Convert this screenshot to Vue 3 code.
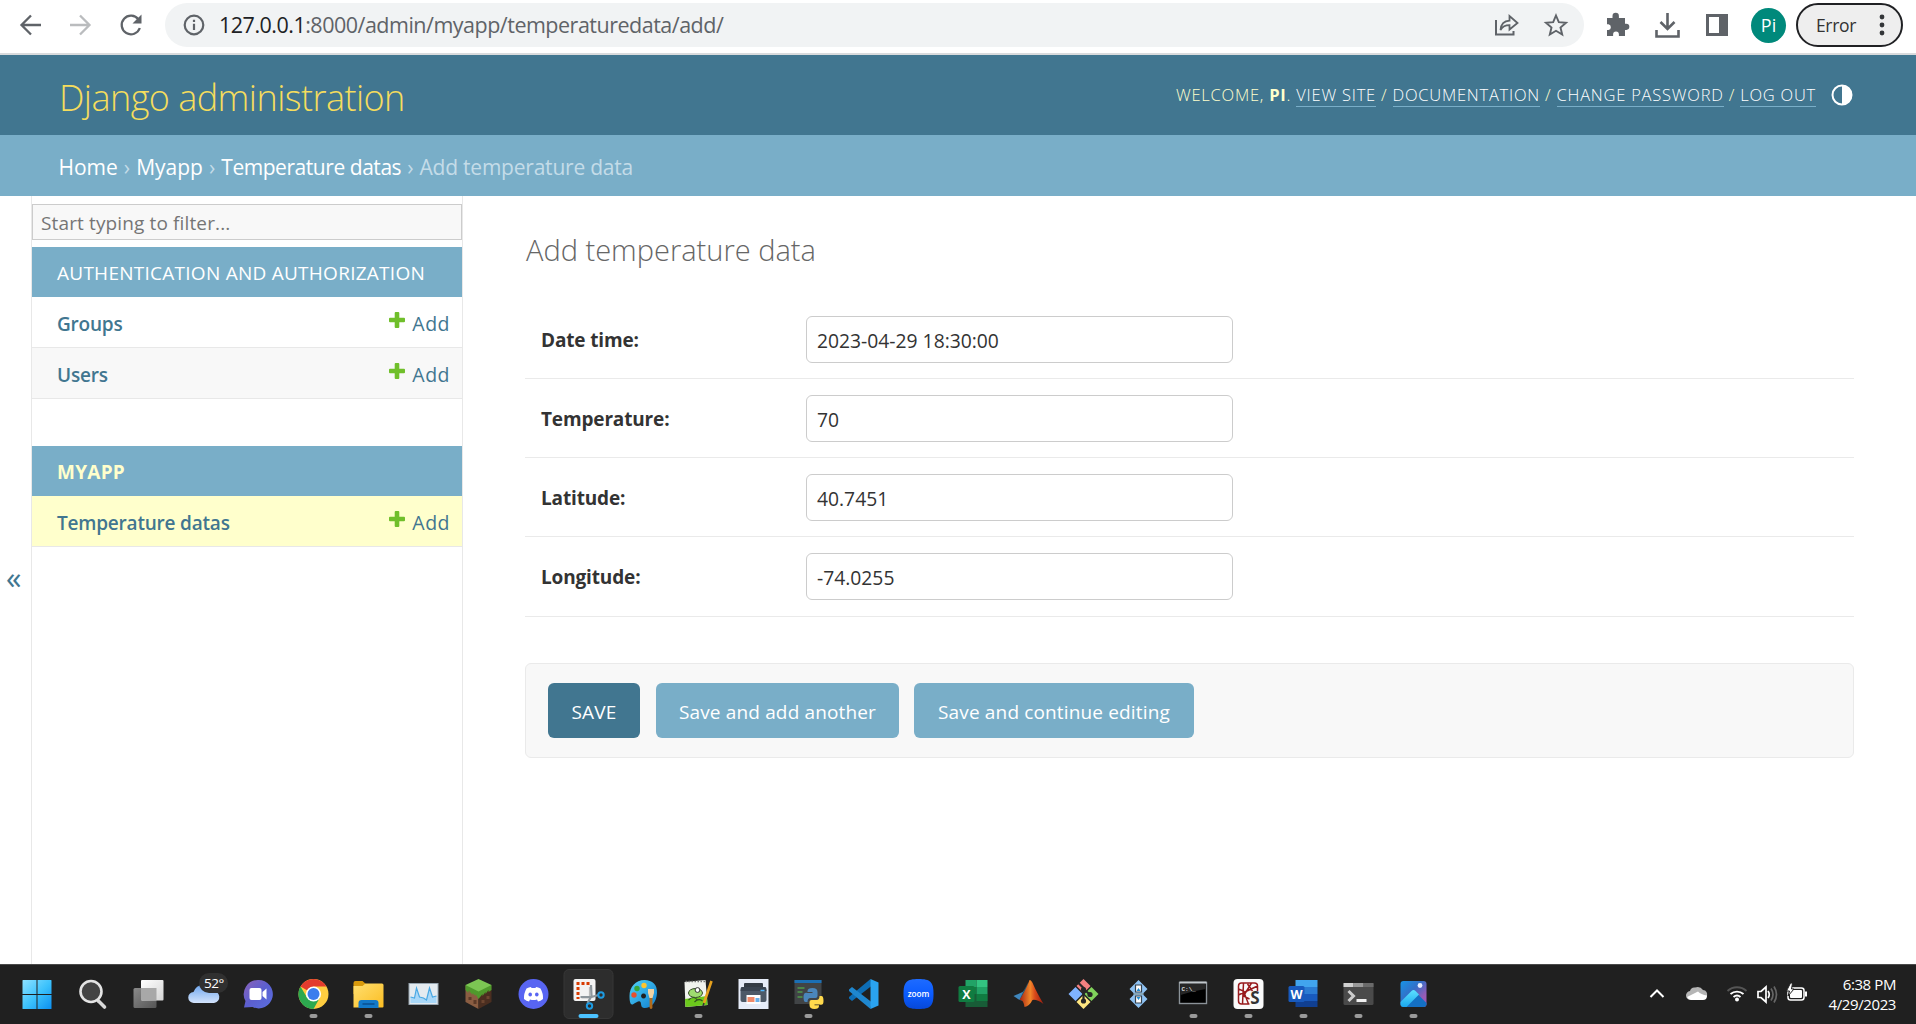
<script setup>
const apps = [
  { name: 'Authentication and Authorization', current: false, models: [{ name: 'Groups' }, { name: 'Users' }] },
  { name: 'Myapp', current: true, models: [{ name: 'Temperature datas', current: true }] },
]
const fields = [
  { label: 'Date time:', value: '2023-04-29 18:30:00' },
  { label: 'Temperature:', value: '70' },
  { label: 'Latitude:', value: '40.7451' },
  { label: 'Longitude:', value: '-74.0255' },
]
</script>

<template>
  <div class="screen">
    <div class="toolbar">
      <svg width="165" height="53" viewBox="0 0 165 53" fill="none" stroke="#5f6368" stroke-width="2.3">
        <path d="M41 25H22M31 15.5L21.5 25L31 34.5" />
        <path d="M70 25H89M80 15.5L89.5 25L80 34.5" stroke="#babcbe" />
        <path d="M138.5 19.5A9.3 9.3 0 1 0 139.8 28" />
        <path d="M141.5 14.5V23.5H132.5Z" fill="#5f6368" stroke="none" />
      </svg>
      <div class="omnibox">
        <svg width="22" height="22" viewBox="0 0 22 22"><circle cx="11" cy="11" r="9.3" fill="none" stroke="#5f6368" stroke-width="2.2" /><path d="M9.9 9.8h2.2v6.2h-2.2zM9.9 5.8h2.2v2.3h-2.2z" fill="#5f6368" /></svg>
        <span class="url"><b>127.0.0.1</b>:8000/admin/myapp/temperaturedata/add/</span>
        <svg class="omni-actions" width="76" height="26" viewBox="0 0 76 26" fill="none" stroke="#5f6368" stroke-width="2">
          <path d="M2 8V22.5H19.5V19" />
          <path d="M6.5 18C7 12 10.5 9 15.5 8.7V4L23.5 11L15.5 17.5V13.2C11.5 13.2 8.5 14.5 6.5 18Z" stroke-width="1.8" />
          <path d="M62 3.5L64.800 10.2L72 10.8L66.500 15.5L68.200 22.5L62 18.8L55.800 22.5L57.500 15.5L52 10.8L59.200 10.2Z" stroke-width="1.9" />
        </svg>
      </div>
      <svg class="ext" width="124" height="30" viewBox="0 0 124 30">
        <path d="M3 8h5.5V6a3.200 3.200 0 0 1 6.400 0v2H21v5.800h1.300a3 3 0 0 1 0 6.100H21V26h-6.100v-1.500a2.900 2.900 0 0 0-5.800 0V26H3v-6h1.500a2.900 2.900 0 0 0 0-5.700H3Z" fill="#5f6368" />
        <g fill="none" stroke="#5f6368" stroke-width="2.6"><path d="M63.5 3V18M56.5 12L63.5 19L70.5 12M52.5 20V26.5H74.5V20" /></g>
        <path d="M102 4h22v22h-22zM105 7v16h10V7z" fill="#5f6368" fill-rule="evenodd" />
      </svg>
      <span class="avatar">Pi</span>
      <div class="error-pill"><span>Error</span><svg width="6" height="22" viewBox="0 0 6 22" fill="#333639"><circle cx="3" cy="3" r="2.4" /><circle cx="3" cy="11" r="2.4" /><circle cx="3" cy="19" r="2.4" /></svg></div>
    </div>

    <header class="header">
      <h1>Django administration</h1>
      <div class="user-tools">
        <p>WELCOME, <strong>PI</strong>. <a>VIEW SITE</a> / <a>DOCUMENTATION</a> / <a>CHANGE PASSWORD</a> / <a>LOG OUT</a></p>
        <svg width="22" height="22" viewBox="0 0 22 22"><circle cx="11" cy="11" r="9.5" fill="none" stroke="#fff" stroke-width="2" /><path d="M11 1A10 10 0 0 1 11 21Z" fill="#fff" /></svg>
      </div>
    </header>
    <nav class="breadcrumbs">
      <a>Home</a><i>›</i><a>Myapp</a><i>›</i><a class="tight">Temperature datas</a><i>›</i><span>Add temperature data</span>
    </nav>

    <div class="main">
      <div class="toggle">«</div>
      <aside class="sidebar">
        <div class="filter">Start typing to filter...</div>
        <section v-for="app in apps" :key="app.name" class="module">
          <h2 :class="{ current: app.current }">{{ app.name.toUpperCase() }}</h2>
          <div v-for="(m, i) in app.models" :key="m.name" class="model" :class="{ current: m.current, alt: i % 2 }">
            <a class="name">{{ m.name }}</a>
            <a class="add"><svg width="16" height="16" viewBox="0 0 16 16"><path d="M6.7 0h2.600q1 0 1 1v4.700h4.700q1 0 1 1v2.600q0 1-1 1h-4.700v4.700q0 1-1 1h-2.600q-1 0-1-1v-4.700h-4.700q-1 0-1-1v-2.600q0-1 1-1h4.700v-4.700q0-1 1-1Z" fill="#70bf2b" /></svg><span>Add</span></a>
          </div>
        </section>
      </aside>
      <main class="content">
        <h1>Add temperature data</h1>
        <div v-for="f in fields" :key="f.label" class="row">
          <label>{{ f.label }}</label>
          <div class="input">{{ f.value }}</div>
        </div>
        <div class="submit-row">
          <button class="save">SAVE</button>
          <button class="another">Save and add another</button>
          <button class="continue">Save and continue editing</button>
        </div>
      </main>
    </div>

    <footer class="taskbar">
      <svg width="0" height="0" class="defs">
        <defs>
          <linearGradient id="win" gradientUnits="userSpaceOnUse" x1="-15" y1="-14" x2="14" y2="15"><stop offset="0" stop-color="#8be0ff" /><stop offset="0.5" stop-color="#3cc2fc" /><stop offset="1" stop-color="#0a8df0" /></linearGradient>
          <linearGradient id="wht" x1="0" y1="0" x2="1" y2="1"><stop offset="0" stop-color="#fff" /><stop offset="1" stop-color="#d4d4d4" /></linearGradient>
          <linearGradient id="gry" x1="0" y1="0" x2="1" y2="1"><stop offset="0" stop-color="#8a8a8a" /><stop offset="1" stop-color="#555" /></linearGradient>
          <linearGradient id="cld" x1="0" y1="0" x2="0" y2="1"><stop offset="0" stop-color="#6ea6ee" /><stop offset="1" stop-color="#d3e3fb" /></linearGradient>
          <linearGradient id="cht" x1="0" y1="0" x2="1" y2="1"><stop offset="0" stop-color="#8b62b8" /><stop offset="0.5" stop-color="#5b5fd0" /><stop offset="1" stop-color="#5a6fe0" /></linearGradient>
          <linearGradient id="fld" x1="0" y1="0" x2="1" y2="1"><stop offset="0" stop-color="#ffdf70" /><stop offset="1" stop-color="#fbbd22" /></linearGradient>
          <linearGradient id="pnt" x1="0" y1="0" x2="1" y2="1"><stop offset="0" stop-color="#52d3f8" /><stop offset="1" stop-color="#0f7fd0" /></linearGradient>
          <linearGradient id="mat" x1="0" y1="0" x2="1" y2="0"><stop offset="0" stop-color="#a5200f" /><stop offset="0.45" stop-color="#f0862a" /><stop offset="0.65" stop-color="#d8481a" /><stop offset="1" stop-color="#9a1c0e" /></linearGradient>
          <linearGradient id="pho" x1="0" y1="0" x2="1" y2="1"><stop offset="0" stop-color="#1794e6" /><stop offset="0.4" stop-color="#3270c8" /><stop offset="0.75" stop-color="#9a5bb5" /></linearGradient>
          <linearGradient id="mtn" x1="0" y1="0" x2="0" y2="1"><stop offset="0" stop-color="#5ce0ff" /><stop offset="1" stop-color="#1aa7ee" /></linearGradient>
          <linearGradient id="zm" x1="0" y1="0" x2="0" y2="1"><stop offset="0" stop-color="#1e6bff" /><stop offset="0.5" stop-color="#0b5cff" /><stop offset="1" stop-color="#0748d8" /></linearGradient>
        </defs>
      </svg>

      <!-- start -->
      <svg class="app" viewBox="-27.5 -30 55 60"><path d="M-16-13.500q0-.5.500-.5H-2V0H-16ZM-1-14H12.500q.5 0 .5.500V0H-1ZM-16 1H-2V15H-15.500q-.5 0-.5-.5ZM-1 1H13V14.500q0 .5-.5.500H-1Z" fill="url(#win)" /></svg>
      <!-- search -->
      <svg class="app" viewBox="-27.5 -30 55 60"><path d="M5 7L11 13" stroke="#d8d8d8" stroke-width="3.600" stroke-linecap="round" /><circle cx="-2.500" cy="-2.500" r="10.500" fill="#444" stroke="#e4e4e4" stroke-width="2.600" /></svg>
      <!-- task view -->
      <svg class="app" viewBox="-27.5 -30 55 60"><rect x="-15" y="-6" width="23" height="20" rx="1.500" fill="url(#gry)" /><rect x="-7.500" y="-14" width="22.500" height="20.500" rx="1" fill="url(#wht)" /><rect x="-7.500" y="-6" width="15.500" height="12" fill="#a8a8a8" /></svg>
      <!-- weather -->
      <svg class="app" viewBox="-27.5 -30 55 60"><path d="M-9.500 9a5.500 5.500 0 0 1-.5-11Q-7-10 1-9T9-3a6 6 0 0 1 1.500 12Z" fill="url(#cld)" /><rect x="-4.500" y="-21" width="29" height="20" rx="10" fill="#303030" /><text x="10.500" y="-6.500" class="badge">52°</text></svg>
      <!-- chat -->
      <svg class="app" viewBox="-27.5 -30 55 60"><path d="M0-14A14.200 14.200 0 1 1-6 13L-14.500 13.500L-13 7A14.200 14.200 0 0 1 0-14Z" fill="url(#cht)" /><rect x="-9" y="-6" width="12" height="12" rx="2" fill="#fff" /><path d="M4-2L8-5.500V5.500L4 2Z" fill="#fff" /></svg>
      <!-- chrome -->
      <svg class="app" viewBox="-27.5 -30 55 60"><circle r="15" fill="#ffcd40" /><path d="M0 0L-13-7.500A15 15 0 0 1 13-7.500H0Z" fill="#e33b2e" /><path d="M-13-7.500A15 15 0 0 0 0 15L6.500 3.500L0 0L-6.500 3.500Z" fill="#2da94f" /><circle r="7.600" fill="#fff" /><circle r="6" fill="#3b7ded" /><rect x="-4" y="20" width="8" height="4" rx="2" class="dot" /></svg>
      <!-- file explorer -->
      <svg class="app" viewBox="-27.5 -30 55 60"><path d="M-15-11q0-2 2-2h7l4 3.500h10V0h-23Z" fill="#d99a0b" /><path d="M-15-8H-6L-3-10.500H13.500q1.500 0 1.500 1.500V12.500q0 1-1 1H-15Z" fill="url(#fld)" /><path d="M-10 14V9q0-3 3-3H7q3 0 3 3v5Z" fill="#1379c9" /><path d="M-6 10H6" stroke="#0a4f8f" stroke-width="1.500" /><rect x="-4" y="20" width="8" height="4" rx="2" class="dot" /></svg>
      <!-- resource monitor -->
      <svg class="app" viewBox="-27.5 -30 55 60"><rect x="-14.500" y="-10.500" width="29" height="21" fill="#e4ebf0" stroke="#97a5b0" /><path d="M-13 3L-9 4L-7-6L-4 3L0 4L3 6L6-6L9 3L13 2V9H-13Z" fill="#a9d8f8" /><path d="M-13 3L-9 4L-7-6L-4 3L0 4L3 6L6-6L9 3L13 2" fill="none" stroke="#4aa9e4" stroke-width="1.200" /></svg>
      <!-- minecraft -->
      <svg class="app" viewBox="-27.5 -30 55 60"><path d="M-13-8.500L0-2V15L-13 8Z" fill="#8a5d42" /><path d="M13-8.500L0-2V15L13 8Z" fill="#4b2e20" /><path d="M-13-9H13V-4L10-2V-4L7 0V-2L4 2V0L0 5L-3 0V2L-6-1V1L-10-4V-1L-13-4Z" fill="#4f9a2c" /><path d="M0-15L13-9L0-2.500L-13-9Z" fill="#7cc653" /><path d="M-10 3h3v3h-3zM-5 6h3v4h-3z" fill="#5d3b28" /><path d="M3 6h3v3h-3zM8 2h3v3h-3z" fill="#6c452f" /></svg>
      <!-- discord -->
      <svg class="app" viewBox="-27.5 -30 55 60"><circle r="15" fill="#5865f2" /><path d="M-7-5.500Q-4.500-7-2.500-7L-2-6H2L2.500-7Q4.500-7 7-5.500Q10 0 9.500 5Q7 7 4.500 7.500L3.500 5.500Q0 6.500-3.500 5.500L-4.500 7.500Q-7 7-9.500 5Q-10 0-7-5.500Z" fill="#fff" /><ellipse cx="-3.300" cy=".5" rx="1.800" ry="2" fill="#5865f2" /><ellipse cx="3.300" cy=".5" rx="1.800" ry="2" fill="#5865f2" /></svg>
      <!-- snipping tool -->
      <svg class="app" viewBox="-27.5 -30 55 60"><rect x="-24.500" y="-24.500" width="49" height="49" rx="5" fill="#2d2d2d" stroke="#373737" /><rect x="-15" y="-15" width="22" height="22" rx="2" fill="#f3f3f3" /><path d="M-12-10.500H2M-10.500-7V5" stroke="#d83b01" stroke-width="3" stroke-dasharray="3 2" fill="none" /><path d="M-7 4H1V-7" stroke="#bbb" stroke-width="1.200" fill="none" /><path d="M2.500-9L3 2L-1 9M-8 3H3L10 1" stroke="#8d969c" stroke-width="2.200" fill="none" /><circle cx="12.500" cy="1" r="2.700" fill="none" stroke="#1d9be2" stroke-width="2" /><circle cx="1" cy="12" r="2.700" fill="none" stroke="#1d9be2" stroke-width="2" /><rect x="-10" y="20" width="20" height="4" rx="2" fill="#4cc2ff" /></svg>
      <!-- paint -->
      <svg class="app" viewBox="-27.5 -30 55 60"><path d="M1-14C9-14 14-9 13.500-1C13 8 8 14 1 14C-3 14-2 10-3 8S-7 8-10 10S-14 8-14 2C-14-7-8-14 1-14ZM0-.5a2.500 2.500 0 1 0 .1 0Z" fill="url(#pnt)" fill-rule="evenodd" /><circle cx="-9.500" cy="1" r="2.700" fill="#e8502f" /><circle cx="-6.500" cy="-5.500" r="2.700" fill="#37a63a" /><circle cx="0.500" cy="-8.500" r="2.700" fill="#ffc52e" /><path d="M7.500 3V13.500" stroke="#b06a1c" stroke-width="2.800" stroke-linecap="round" /><path d="M4.500-5H10.500V-1L9 4H6L4.500-1Z" fill="#f1d3a4" /></svg>
      <!-- notepad++ -->
      <svg class="app" viewBox="-27.5 -30 55 60"><path d="M-14-12L7-14L9 11L-13 13Z" fill="#f1f3ee" /><path d="M-13-12.500h20" stroke="#777" stroke-width="1.600" stroke-dasharray="1.500 1.500" /><path d="M-13.500 5L8.500 2L9 11L-13 13Z" fill="#6cc91c" /><ellipse cx="-3" cy="-1" rx="7" ry="4.500" fill="#9fdc70" stroke="#374b28" /><circle cx="-1" cy="-4" r="2.400" fill="#fff" stroke="#333" /><path d="M-10 6q5-5 9 0M-4 8q4-4 8-1" fill="none" stroke="#335522" stroke-width="1.200" /><path d="M13-13L5.500 9" stroke="#e6a11e" stroke-width="2.600" /><path d="M5.500 9L4.500 12" stroke="#333" stroke-width="1.500" /><rect x="-4" y="20" width="8" height="4" rx="2" class="dot" /></svg>
      <!-- printer -->
      <svg class="app" viewBox="-27.5 -30 55 60"><rect x="-15" y="-15" width="30" height="30" fill="#e6ecf8" /><rect x="-9.500" y="-11" width="19" height="7" rx="1" fill="#343c46" /><rect x="-13" y="-7" width="26" height="15" rx="2" fill="#4d5967" /><path d="M-12-7H12L13-3H-13Z" fill="#3a4451" /><path d="M-7 1H7V10H-7Z" fill="#fff" /><path d="M-6 3H1V8H-6Z" fill="#f08a6a" /><path d="M2 4H6V8H2Z" fill="#68aee8" /><path d="M7-3.500H11" stroke="#53b8ff" stroke-width="1.500" /></svg>
      <!-- python shell -->
      <svg class="app" viewBox="-27.5 -30 55 60"><rect x="-14" y="-14" width="27" height="24" fill="#414446" /><path d="M-14-14H13V-11H-14Z" fill="#1b6fb4" /><path d="M-11-6H-4M-11-2H-6M-11 3H-6" stroke="#4f9a4a" stroke-width="1.400" /><path d="M4-6q5 0 5 4V2q0 2-2 2H2q-3 0-3 4H-3q-2 0-2-5T-1-1H4V-2H-1V-3q0-3 5-3Z" fill="#4a86bb" /><path d="M6 15q-5 0-5-4V8q0-2 2-2H8q3 0 3-4h2q2 0 2 5T11 10.500H6v.8h4.500v.7q0 3-4.500 3Z" fill="#ffd94c" /><rect x="-4" y="20" width="8" height="4" rx="2" class="dot" /></svg>
      <!-- vs code -->
      <svg class="app" viewBox="-27.5 -30 55 60"><path d="M7-15L8-8L-11.500 7L-14.500 4.500V3Z" fill="#0d6db5" /><path d="M7 15L8 8L-11.500-7L-14.500-4.500V-3Z" fill="#1f87cf" /><path d="M7-15L15-11.500V11.500L7 15Z" fill="#2aa3f0" /></svg>
      <!-- zoom -->
      <svg class="app" viewBox="-27.5 -30 55 60"><path d="M0-15C12-15 15-12 15 0S12 15 0 15S-15 12-15 0S-12-15 0-15Z" fill="url(#zm)" /><text x="0" y="2.600" class="zoom">zoom</text></svg>
      <!-- excel -->
      <svg class="app" viewBox="-27.5 -30 55 60"><path d="M-8-14H3V-7H-8Z" fill="#21a366" /><path d="M3-14H14V-7H3Z" fill="#33c481" /><path d="M-8-7H3V0H-8Z" fill="#107c41" /><path d="M3-7H14V0H3Z" fill="#21a366" /><path d="M-8 0H14V13H-8Z" fill="#185c37" /><path d="M3 0H14V7H3Z" fill="#107c41" /><rect x="-15" y="-8" width="16" height="16" rx="1.500" fill="#107c41" /><text x="-7" y="5" class="letter">X</text></svg>
      <!-- matlab -->
      <svg class="app" viewBox="-27.5 -30 55 60"><path d="M-15 2L-6-2L-1-7L-4 5L-9 6Z" fill="#3f86bd" /><path d="M0-12L-5-3L-9 6L-6 7L-4 4Z" fill="#24566e" /><path d="M1-14Q-1-8-6 1L-9 6Q-5 5-4 13Q1 12 4 6Q8 5 15 10Q8-2 5-9Q3-14 1-14Z" fill="url(#mat)" /></svg>
      <!-- git -->
      <svg class="app" viewBox="-27.5 -30 55 60"><path d="M0-15L7-8L0-1L-7-8Z" fill="#f58080" /><path d="M-8-7L-1 0L-8 7L-15 0Z" fill="#80b3ff" /><path d="M8-7L15 0L8 7L1 0Z" fill="#80d25b" /><path d="M0 1L7 8L0 15L-7 8Z" fill="#ffe680" /><path d="M-5-11L0-6V8M0-5L7 1" stroke="#262626" stroke-width="2.200" fill="none" /><circle cy="-4.500" r="2.600" fill="#262626" /><circle cx="6.500" cy="0.500" r="2.600" fill="#262626" /><circle cy="7" r="2.600" fill="#262626" /></svg>
      <!-- sync -->
      <svg class="app" viewBox="-27.5 -30 55 60"><path d="M0-14L9-5L4 0L9 5L0 14L-9 5L-4 0L-9-5Z" fill="#8ec2f3" /><path d="M-3-9H3V-2H-3ZM-3 2H3V9H-3Z" fill="#fff" stroke="#35424e" stroke-width="1.200" /><path d="M-2-3L0-6L2-3ZM-2 3L0 6L2 3Z" fill="#1d8bd1" /><path d="M-5 0H5" stroke="#86a6b8" stroke-width="2" /></svg>
      <!-- command prompt -->
      <svg class="app" viewBox="-27.5 -30 55 60"><rect x="-14" y="-11.500" width="27" height="21" fill="#000" stroke="#8b9298" stroke-width="1.400" /><path d="M-14-11.500H13" stroke="#c2c8cc" stroke-width="2" /><path d="M-13-10H12V-5Q0-3-13 1Z" fill="#262626" /><text x="-12" y="-3.500" class="prompt">C:\_</text><rect x="-4" y="20" width="8" height="4" rx="2" class="dot" /></svg>
      <!-- spyder -->
      <svg class="app" viewBox="-27.5 -30 55 60"><rect x="-15" y="-15" width="30" height="30" rx="4" fill="#fafafa" /><path d="M9-3V-8Q9-11 6-11H-7Q-10-11-10-8V7Q-10 10-7 10H1M-5-11L-6 10M-10 1L9-8M-10-5L-5-3L0 10M3-11L-5 2L1 5M-1-10L4-3" fill="none" stroke="#981b1e" stroke-width="1.500" /><text x="6.500" y="10" class="spy">S</text><rect x="-4" y="20" width="8" height="4" rx="2" class="dot" /></svg>
      <!-- word -->
      <svg class="app" viewBox="-27.5 -30 55 60"><path d="M-8-14H14V-7H-8Z" fill="#41a5ee" /><path d="M-8-7H14V0H-8Z" fill="#2b7cd3" /><path d="M-8 0H14V7H-8Z" fill="#185abd" /><path d="M-8 7H14V13H-8Z" fill="#103f91" /><rect x="-15" y="-8" width="16" height="16" rx="1.500" fill="#185abd" /><text x="-7" y="4.500" class="letter">W</text><rect x="-4" y="20" width="8" height="4" rx="2" class="dot" /></svg>
      <!-- terminal -->
      <svg class="app" viewBox="-27.5 -30 55 60"><rect x="-15" y="-11" width="30" height="22" rx="1.500" fill="#4a4a4a" /><path d="M-15-11H-5V-7H-15Z" fill="#d0d0d0" /><path d="M-5-11H5V-7H-5Z" fill="#999" /><path d="M5-11H15V-7H5Z" fill="#6a6a6a" /><path d="M-10-3L-5 2L-10 7" fill="none" stroke="#ccc" stroke-width="3" /><path d="M-2 6.500H8" stroke="#f0f0f0" stroke-width="3" /><rect x="-4" y="20" width="8" height="4" rx="2" class="dot" /></svg>
      <!-- photos -->
      <svg class="app" viewBox="-27.5 -30 55 60"><rect x="-13" y="-13" width="26" height="26" rx="3" fill="url(#pho)" /><path d="M1-3L13 9V10Q13 13 10 13H-7Z" fill="#1470c4" /><path d="M-13 8L-2-3Q0-5 2-3L5.500 .5L-7 13H-10Q-13 13-13 10Z" fill="url(#mtn)" /><circle cx="6.500" cy="-8.500" r="2.400" fill="#e8efff" /><rect x="-4" y="20" width="8" height="4" rx="2" class="dot" /></svg>

      <svg class="tray" width="166" height="24" viewBox="0 0 166 24">
        <path d="M3.500 15L10 8.500L16.500 15" fill="none" stroke="#fff" stroke-width="2" />
        <path d="M44 18a4.500 4.500 0 0 1-1-9Q44 5 48 5.500Q53 3.500 56 8Q61 8.500 60 14.500Z" fill="#b5b5b5" /><path d="M44 18q-3-.5-4-3l11-5.500q3 3 9 4q0 4.500-4 4.500Z" fill="#fff" />
        <g fill="none" stroke="#fff" stroke-width="1.900"><path d="M80.500 9a14 14 0 0 1 19 0" stroke="#555" /><path d="M83.500 12a10 10 0 0 1 13 0M86.500 15a5.500 5.500 0 0 1 7 0" /></g><circle cx="90" cy="17.500" r="2" fill="#fff" />
        <g fill="none" stroke="#fff" stroke-width="1.700"><path d="M111 9.500h3l5-4.500v15l-5-4.500h-3Z" /><path d="M121 9q2.500 3.500 0 7" /><path d="M124 6.500q4 6 0 12M127 4.500q5 8 0 16" stroke="#666" /></g>
        <rect x="141" y="6" width="16" height="12" rx="2.500" fill="none" stroke="#fff" stroke-width="1.500" /><rect x="143" y="8" width="12" height="8" rx="1" fill="#fff" /><path d="M159 9.500v5" stroke="#fff" stroke-width="2" /><path d="M143.500 1L139.500 9H142.500L141 14L147 7H144.500L145.500 1Z" fill="#fff" stroke="#202020" stroke-width="1" />
      </svg>
      <div class="clock"><span>6:38 PM</span><span>4/29/2023</span></div>
    </footer>
  </div>
</template>

<style>
body { margin: 0; }
</style>
<style scoped>
.screen { width: 1916px; height: 1024px; overflow: hidden; background: #fff; font-family: "Open Sans", "Noto Sans", sans-serif; display: flex; flex-direction: column; color: #333; }
.toolbar { height: 53px; display: flex; align-items: flex-start; border-bottom: 2px solid #d9dbdd; flex: none; }
.omnibox { margin-top: 3px; width: 1419px; height: 44px; border-radius: 22px; background: #f1f3f4; display: flex; align-items: center; padding: 0 14px 0 18px; box-sizing: border-box; }
.url { margin-left: 14px; font-size: 21.5px; line-height: 42px; padding-bottom: 1px; letter-spacing: -0.5px; color: #5f6368; white-space: nowrap; }
.url b { font-weight: 400; color: #202124; }
.omni-actions { margin-left: auto; }
.ext { margin: 10px 0 0 20px; }
.avatar { margin: 8px 0 0 23px; width: 35px; height: 35px; border-radius: 50%; background: #00897b; color: #fff; text-align: center; line-height: 35px; font-size: 18px; }
.error-pill { margin: 3px 0 0 10px; box-sizing: border-box; width: 107px; height: 44px; border: 2px solid #202124; border-radius: 22px; background: #eee; display: flex; align-items: center; justify-content: space-between; padding: 0 16px 0 18px; font-size: 17.5px; letter-spacing: -0.35px; }
.header { height: 80px; background: #417690; display: flex; justify-content: space-between; padding: 0 63px 0 59px; flex: none; }
.header h1 { margin: 0; font-weight: 300; font-size: 36px; line-height: 86px; letter-spacing: -0.55px; color: #f5dd5d; }
.user-tools { font-size: 16.5px; font-weight: 300; letter-spacing: 0.77px; color: #ffc; display: flex; gap: 15px; height: 80px; align-items: center; }
.user-tools p { margin: 0; padding-bottom: 1px; white-space: nowrap; }
.user-tools strong { font-weight: 700; }
.user-tools a { color: #fff; border-bottom: 1px solid #79aec8; }
.breadcrumbs { box-sizing: border-box; height: 61px; background: #79aec8; color: #c4dce8; font-size: 21px; display: flex; align-items: center; padding: 2px 0 0 58.5px; flex: none; gap: 6px; }
.breadcrumbs a { color: #fff; }
.breadcrumbs .tight { letter-spacing: -0.45px; }
.breadcrumbs span { letter-spacing: -0.22px; }
.breadcrumbs i { font-style: normal; }
.main { flex: 1; display: flex; min-height: 0; }
.toggle { width: 31px; padding: 362px 0 0 6px; color: #417690; font-size: 31px; line-height: 38px; box-sizing: border-box; }
.sidebar { width: 430px; border: solid #e8e8e8; border-width: 0 1px; padding-top: 8px; }
.filter { height: 36px; box-sizing: border-box; border: 1px solid #ccc; background: #f8f8f8; font-size: 19px; letter-spacing: 0.13px; line-height: 36px; color: #757575; padding-left: 8px; margin-bottom: 7px; }
.module { margin-bottom: 47px; }
.module h2 { margin: 0; height: 50px; line-height: 53px; background: #79aec8; color: #fff; font-weight: 400; font-size: 19px; letter-spacing: 0.26px; padding-left: 25px; }
.module h2.current { color: #ffc; font-weight: 700; }
.model { height: 50px; border-bottom: 1px solid #e8e8e8; display: flex; justify-content: space-between; padding: 0 12px 0 25px; line-height: 55px; font-size: 19px; color: #417690; }
.model.alt { background: #f8f8f8; }
.model.current { background: #ffc; }
.model .name { font-weight: 600; letter-spacing: -0.2px; }
.model .add { display: flex; gap: 7px; font-size: 19.5px; line-height: 54px; letter-spacing: 0.5px; }
.model svg { margin-top: 15px; }
.content { padding: 34px 0 0 62px; width: 1329px; }
.content h1 { margin: 0 0 30px; padding-left: 1px; font-size: 29px; font-weight: 300; line-height: 40px; color: #666; }
.row { display: flex; align-items: flex-start; height: 78px; border-bottom: 1px solid #eaeaea; }
.row:nth-of-type(4) { height: 79px; }
.row label { width: 265px; padding-left: 16px; font-weight: 700; font-size: 19px; letter-spacing: -0.15px; line-height: 80px; }
.input { margin-top: 16px; width: 427px; height: 47px; box-sizing: border-box; border: 1px solid #ccc; border-radius: 6px; font-size: 19.3px; line-height: 47px; padding-left: 10px; }
.submit-row { box-sizing: border-box; margin-top: 46px; height: 95px; border: 1px solid #eaeaea; border-radius: 6px; background: #f8f8f8; display: flex; padding: 19px 22px; }
.submit-row button { height: 55px; border: 0; border-radius: 6px; padding: 2px 0 0; color: #fff; background: #79aec8; font: 400 19px "Open Sans", sans-serif; letter-spacing: 0.15px; }
.submit-row .save { width: 92px; background: #417690; }
.submit-row .another { width: 243px; margin-left: 16px; }
.submit-row .continue { width: 280px; margin-left: 15px; }
.taskbar { box-sizing: border-box; height: 60px; flex: none; background: #202020; box-shadow: inset 0 1px #4a4a4a; display: flex; padding-left: 10.5px; }
.defs { position: absolute; }
.app { width: 55px; height: 60px; flex: none; }
.dot { fill: #9a9a9a; }
.badge { font: 13.5px "Open Sans", sans-serif; fill: #fff; text-anchor: middle; letter-spacing: -0.4px; }
.zoom { font: 600 8.2px "Open Sans", sans-serif; fill: #fff; text-anchor: middle; }
.letter { font: 700 12.5px "Open Sans", sans-serif; fill: #fff; text-anchor: middle; }
.prompt { font: 700 6px "Liberation Mono", monospace; fill: #ddd; }
.spy { font: 700 17px "Open Sans", sans-serif; fill: #333; text-anchor: middle; }
.tray { margin: 18px 0 0 auto; }
.clock { width: 83px; padding: 9.5px 20px 0 0; display: flex; flex-direction: column; text-align: right; color: #fff; font-size: 15px; line-height: 20px; letter-spacing: -0.4px; }
</style>
